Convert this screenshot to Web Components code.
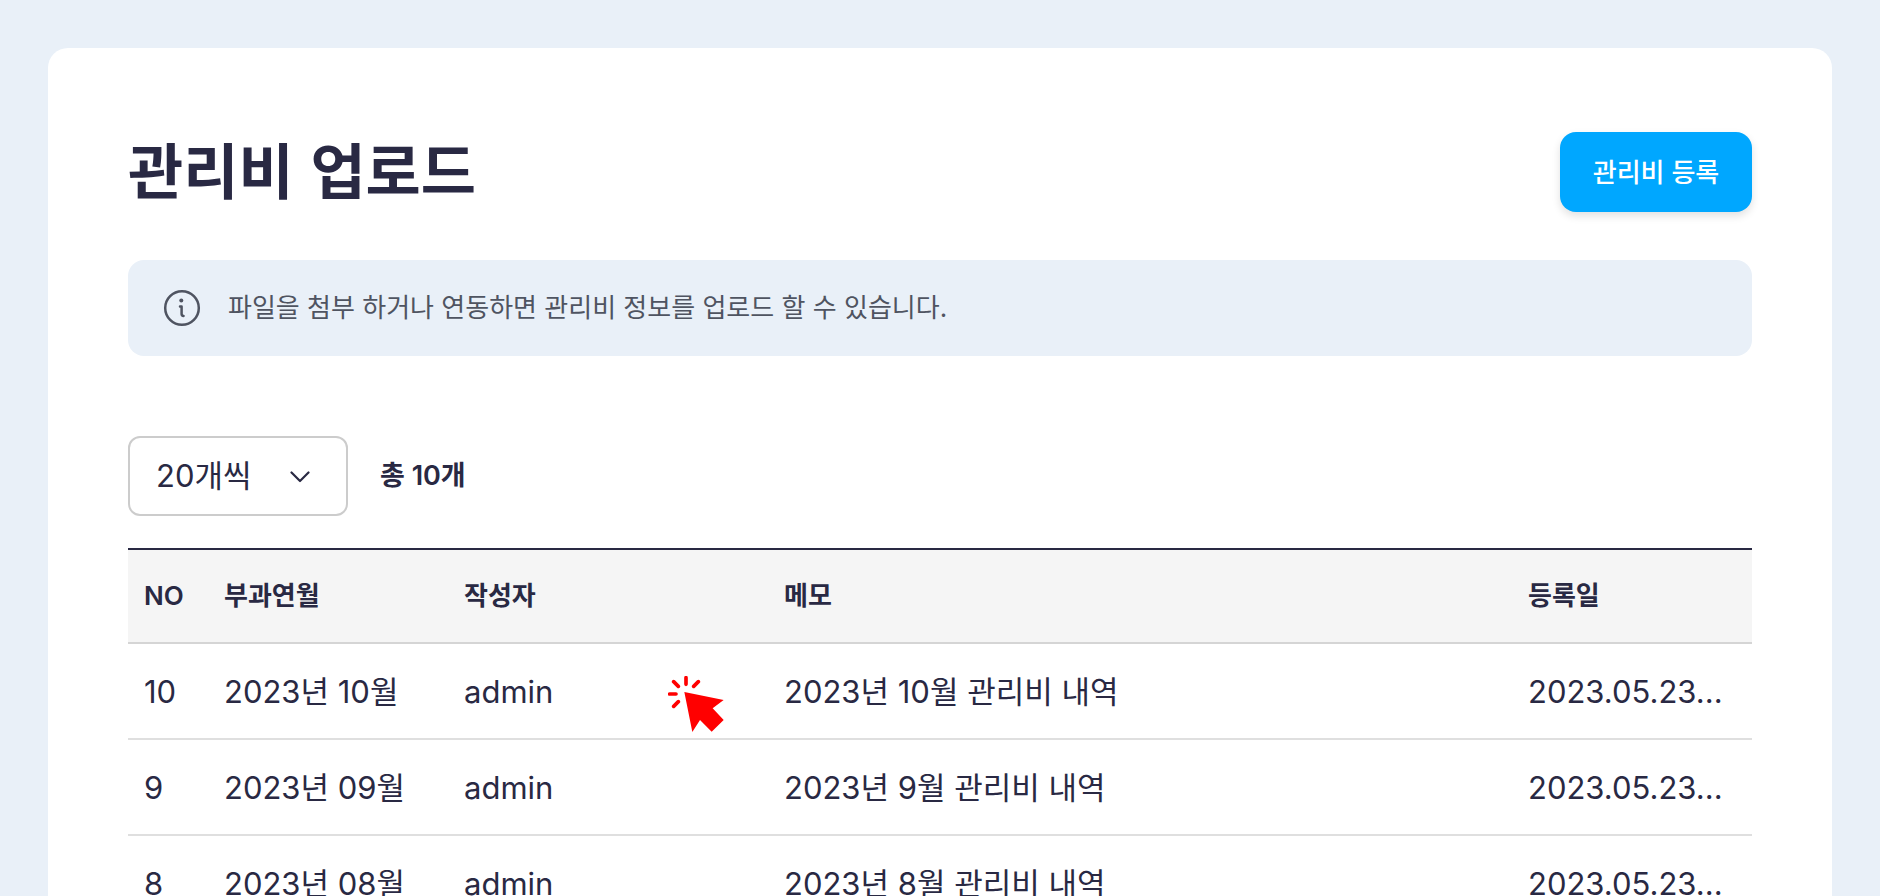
<!DOCTYPE html>
<html lang="ko">
<head>
<meta charset="utf-8">
<meta name="viewport" content="width=device-width, initial-scale=1">
<title>관리비 업로드</title>
<style>
  body {
    margin: 0;
    background: #e9f0f8;
    color: #292943;
    font-family: Inter, "Noto Sans CJK KR", sans-serif;
    font-size: 31px;
    line-height: 40px;
  }
</style>
</head>
<body>
<fee-page>
  <page-header slot="header" heading="관리비 업로드"><action-button>관리비 등록</action-button></page-header>
  <info-notice>파일을 첨부 하거나 연동하면 관리비 정보를 업로드 할 수 있습니다.</info-notice>
  <list-toolbar total="10"></list-toolbar>
  <fee-table><click-pointer slot="overlay"></click-pointer></fee-table>
</fee-page>

<script>
  class BaseElement extends HTMLElement {
    connectedCallback() {
      if (this.shadowRoot) return;
      this.attachShadow({ mode: "open" }).innerHTML = this.render();
    }
  }

  customElements.define("fee-page", class extends BaseElement {
    render() {
      return `
        <style>
          :host { display: block; padding: 48px 48px 0; }
          main { background: #fff; border-radius: 20px 20px 0 0; padding: 80px 80px 0; }
        </style>
        <main><slot name="header"></slot><slot></slot></main>`;
    }
  });

  customElements.define("page-header", class extends BaseElement {
    render() {
      return `
        <style>
          :host { display: flex; align-items: flex-end; justify-content: space-between; padding: 4px 0 0; }
          h1 { margin: 0; padding-bottom: 8px; font-size: 60px; line-height: 72px; font-weight: 600; font-family: "Noto Sans CJK KR", sans-serif; }
        </style>
        <h1>${this.getAttribute("heading")}</h1><slot></slot>`;
    }
  });

  customElements.define("action-button", class extends BaseElement {
    render() {
      return `
        <style>
          :host { display: block; }
          button {
            display: block; min-width: 192px; height: 80px; padding: 2px 24px 0; border: 0; border-radius: 16px;
            background: #00a7ff; color: #fff; font: inherit; font-size: 26px; font-weight: 500;
            box-shadow: 0 4px 8px rgba(0, 0, 0, .12); cursor: pointer;
          }
        </style>
        <button type="button"><slot></slot></button>`;
    }
  });

  customElements.define("info-notice", class extends BaseElement {
    render() {
      return `
        <style>
          :host {
            display: flex; align-items: center; gap: 24px; margin-top: 48px; padding: 28px 32px;
            border-radius: 16px; background: #e9f0f8; color: #4f5461; font-size: 26px;
          }
          svg { flex: none; width: 44px; height: 40px; }
          p { margin: 0; }
        </style>
        <svg viewBox="0 0 44 40" fill="none" stroke="currentColor" stroke-width="2.5" stroke-linecap="round" stroke-linejoin="round" aria-hidden="true">
          <circle cx="22" cy="20" r="16.8"/>
          <path d="M20 18.4h1.6v7.6q0 1.8 2 2"/>
          <circle cx="21.3" cy="12.4" r="2" fill="currentColor" stroke="none"/>
        </svg>
        <p><slot></slot></p>`;
    }
  });

  customElements.define("list-toolbar", class extends BaseElement {
    render() {
      return `
        <style>
          :host { display: flex; align-items: center; gap: 32px; margin-top: 80px; }
          .picker { position: relative; }
          select {
            appearance: none; display: block; box-sizing: border-box; width: 220px; height: 80px;
            padding: 0 26px; border: 2px solid #ccc; border-radius: 12px;
            background: #fff; color: inherit; font: inherit;
          }
          svg { position: absolute; top: 30px; right: 38px; width: 20px; height: 20px; pointer-events: none; }
          output { font-size: 27px; font-weight: 600; }
        </style>
        <div class="picker">
          <select aria-label="페이지당 개수"><option>20개씩</option></select>
          <svg viewBox="0 0 20 20" fill="none" stroke="currentColor" stroke-width="2.2" stroke-linecap="round" stroke-linejoin="round" aria-hidden="true"><path d="M1.5 6.5l8.5 8.5 8.5-8.5"/></svg>
        </div>
        <output>총 ${this.getAttribute("total")}개</output>`;
    }
  });

  customElements.define("fee-table", class extends BaseElement {
    render() {
      const rows = [["10", "10", "10"], ["9", "09", "9"], ["8", "08", "8"]];
      return `
        <style>
          :host { display: block; position: relative; margin-top: 32px; }
          table { width: 100%; table-layout: fixed; border-collapse: separate; border-spacing: 0; }
          th, td { box-sizing: border-box; height: 96px; padding: 0 16px; text-align: left; white-space: nowrap; overflow: hidden; text-overflow: ellipsis; }
          th { background: #f5f5f5; border-top: 2px solid #292943; border-bottom: 2px solid #d5d5d5; font-size: 26px; font-weight: 600; }
          td { padding-top: 2px; border-bottom: 2px solid #dfdfdf; }
          .no { width: 80px; }
          .month, .date { width: 240px; }
          .author { width: 320px; }
        </style>
        <table>
          <colgroup><col class="no"><col class="month"><col class="author"><col><col class="date"></colgroup>
          <thead><tr><th scope="col">NO</th><th scope="col">부과연월</th><th scope="col">작성자</th><th scope="col">메모</th><th scope="col">등록일</th></tr></thead>
          <tbody>${rows.map(([no, month, memo]) => `
            <tr><td>${no}</td><td>2023년 ${month}월</td><td>admin</td><td>2023년 ${memo}월 관리비 내역</td><td>2023.05.23...</td></tr>`).join("")}
          </tbody>
        </table>
        <slot name="overlay"></slot>`;
    }
  });

  customElements.define("click-pointer", class extends BaseElement {
    render() {
      return `
        <style>
          :host { position: absolute; left: 540px; top: 128px; pointer-events: none; }
          svg { display: block; width: 56px; height: 56px; }
        </style>
        <svg viewBox="84 78 168 168" aria-hidden="true">
          <path fill="#f00" d="M133 126L251 150 218 175 251 210 215 245 180 210 157 246z"/>
          <path fill="none" stroke="#f00" stroke-width="11" stroke-linecap="round" d="M138 83v20M101 95l14 14M175 95l-14 14M89 132h19M115 155l-14 14"/>
        </svg>`;
    }
  });
</script>
</body>
</html>
